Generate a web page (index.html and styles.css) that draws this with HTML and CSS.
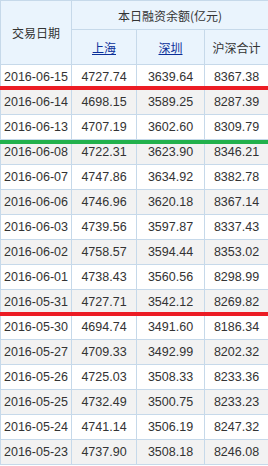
FILE: index.html
```html
<!DOCTYPE html>
<html lang="zh">
<head>
<meta charset="utf-8">
<title>融资余额</title>
<link rel="stylesheet" href="styles.css">
</head>
<body>
<div class="wrap">
<table class="tbl">
<colgroup><col class="c1"><col class="c2"><col class="c3"><col class="c4"></colgroup>
<thead>
<tr class="h1"><th rowspan="2">交易日期</th><th colspan="3">本日融资余额(亿元)</th></tr>
<tr class="h2"><th><a href="#">上海</a></th><th><a href="#">深圳</a></th><th>沪深合计</th></tr>
</thead>
<tbody>
<tr><td>2016-06-15</td><td>4727.74</td><td>3639.64</td><td>8367.38</td></tr>
<tr><td>2016-06-14</td><td>4698.15</td><td>3589.25</td><td>8287.39</td></tr>
<tr><td>2016-06-13</td><td>4707.19</td><td>3602.60</td><td>8309.79</td></tr>
<tr><td>2016-06-08</td><td>4722.31</td><td>3623.90</td><td>8346.21</td></tr>
<tr><td>2016-06-07</td><td>4747.86</td><td>3634.92</td><td>8382.78</td></tr>
<tr><td>2016-06-06</td><td>4746.96</td><td>3620.18</td><td>8367.14</td></tr>
<tr><td>2016-06-03</td><td>4739.56</td><td>3597.87</td><td>8337.43</td></tr>
<tr><td>2016-06-02</td><td>4758.57</td><td>3594.44</td><td>8353.02</td></tr>
<tr><td>2016-06-01</td><td>4738.43</td><td>3560.56</td><td>8298.99</td></tr>
<tr><td>2016-05-31</td><td>4727.71</td><td>3542.12</td><td>8269.82</td></tr>
<tr><td>2016-05-30</td><td>4694.74</td><td>3491.60</td><td>8186.34</td></tr>
<tr><td>2016-05-27</td><td>4709.33</td><td>3492.99</td><td>8202.32</td></tr>
<tr><td>2016-05-26</td><td>4725.03</td><td>3508.33</td><td>8233.36</td></tr>
<tr><td>2016-05-25</td><td>4732.49</td><td>3500.75</td><td>8233.23</td></tr>
<tr><td>2016-05-24</td><td>4741.14</td><td>3506.19</td><td>8247.32</td></tr>
<tr><td>2016-05-23</td><td>4737.90</td><td>3508.18</td><td>8246.08</td></tr>
</tbody>
</table>
<div class="mark red m1"></div>
<div class="mark green m2"></div>
<div class="mark red m3"></div>
</div>
</body>
</html>
```
FILE: styles.css
```css
html, body {
  margin: 0;
  padding: 0;
  background: #ffffff;
}
.wrap {
  position: relative;
  width: 268px;
}
.tbl {
  border-collapse: collapse;
  table-layout: fixed;
  width: 268px;
  font-family: "Liberation Sans", "Noto Sans CJK SC", sans-serif;
  color: #333333;
}
.c1 { width: 71px; }
.c2 { width: 65px; }
.c3 { width: 68px; }
.c4 { width: 64px; }
.tbl th, .tbl td {
  border: 1px solid #c6d9ea;
  padding: 0;
  text-align: center;
  white-space: nowrap;
  overflow: hidden;
}
.tbl th {
  background: #eaf4fd;
  font-weight: normal;
  font-size: 12px;
  font-family: "Noto Sans CJK SC", "Liberation Sans", sans-serif;
}
.h1 th { height: 28px; }
.h2 th { height: 34px; }
.h1 th[rowspan] { padding-top: 0; }
.tbl th a {
  color: #0b2f99;
  text-decoration: underline;
}
.tbl td {
  height: 24px;
  font-size: 12.5px;
  line-height: 24px;
}
.tbl tbody tr:nth-child(even) td {
  background: #f2f2f2;
}
.mark {
  position: absolute;
  left: 0;
  width: 268px;
  height: 4px;
}
.red { background: #ec1c24; }
.green { background: #22b14c; }
.m1 { top: 86px; }
.m2 { top: 140px; }
.m3 { top: 312px; }
```
